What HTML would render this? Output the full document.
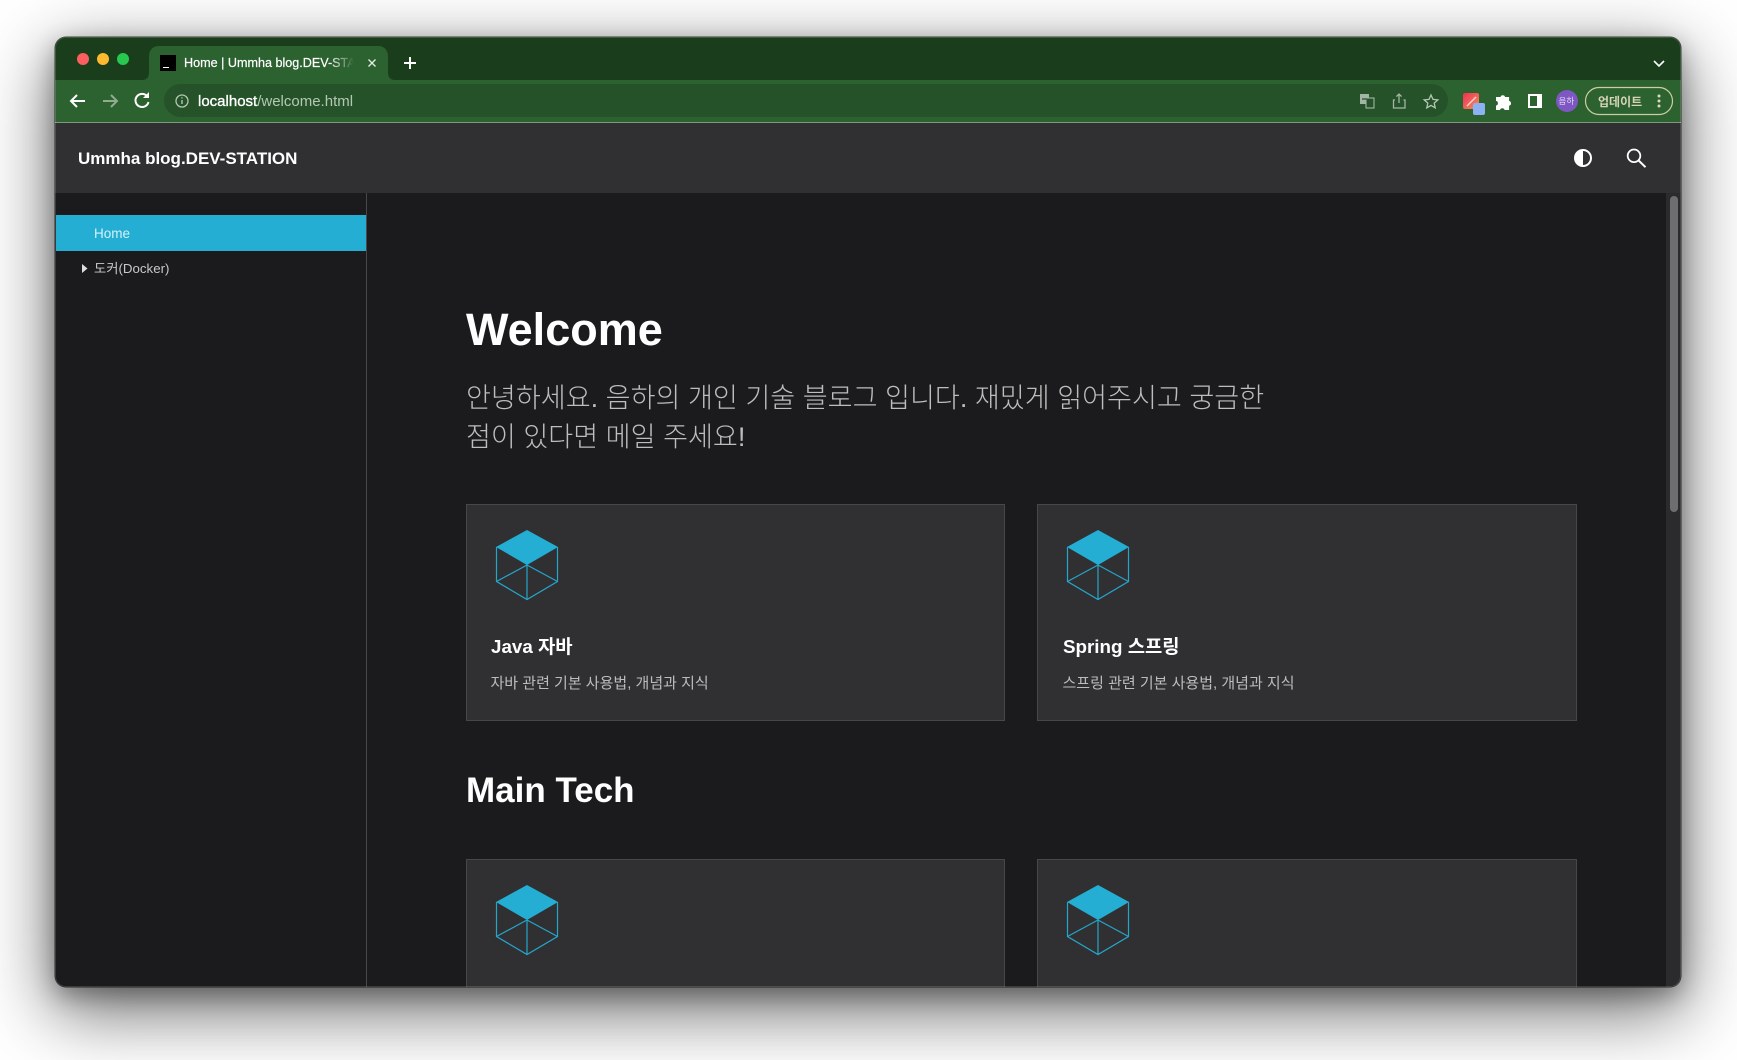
<!DOCTYPE html>
<html lang="ko"><head><meta charset="utf-8"><title>Home | Ummha blog.DEV-STATION</title>
<style>
*{box-sizing:border-box;margin:0;padding:0}
html,body{width:1737px;height:1060px;background:#fff;overflow:hidden;font-family:"Liberation Sans","Noto Sans CJK KR",sans-serif}
.a{position:absolute;white-space:nowrap}
#win{position:absolute;left:55px;top:37px;width:1626px;height:950px;border-radius:11px;overflow:hidden;background:#1b1b1d;box-shadow:0 22px 70px 4px rgba(0,0,0,.56),0 8px 24px rgba(0,0,0,.32)}
#layer{position:absolute;left:-55px;top:-37px;width:1737px;height:1060px}
#rim{position:absolute;left:55px;top:37px;width:1626px;height:950px;border-radius:11px;border:1px solid rgba(255,255,255,.15);box-shadow:0 0 0 .5px rgba(0,0,0,.7)}
.card{position:absolute;background:#303033;border:1px solid #47474a}
.t{font-size:18.8px;font-weight:700;color:#fff;position:absolute;white-space:nowrap;line-height:24px}
.d{font-size:15px;color:#bcbcbc;position:absolute;white-space:nowrap;line-height:20px}
svg{position:absolute;overflow:visible}
</style></head><body>
<div id="win"><div id="layer">
<div class="a" style="left:55px;top:37px;width:1627px;height:43px;background:#1a3e1b"></div>
<div class="a" style="left:55px;top:80px;width:1627px;height:42px;background:#2c6130"></div>
<div class="a" style="left:55px;top:122px;width:1627px;height:1px;background:#7d9a7e"></div>
<svg style="left:0;top:0" width="1737" height="122"><path d="M142 80c5 0 7-3 7-8V56c0-6 4-10 10-10h219c6 0 10 4 10 10v16c0 5 2 8 7 8z" fill="#2c6130"/>
<circle cx="83" cy="59" r="6" fill="#fb5f5f"/><circle cx="103" cy="59" r="6" fill="#fdb92f"/><circle cx="123" cy="59" r="6" fill="#27c84f"/>
<rect x="160" y="55" width="16" height="16" fill="#000"/><rect x="163" y="67" width="6" height="1" fill="#fff"/>
<path d="M368.5 59.5l7 7M375.5 59.5l-7 7" stroke="#e2ebe2" stroke-width="1.4"/>
<path d="M410 57v12M404 63h12" stroke="#fff" stroke-width="2"/>
<path d="M1654 61l5 5 5-5" fill="none" stroke="#fff" stroke-width="1.6"/>
<rect x="164" y="84" width="1284" height="33" rx="16.5" fill="#265229"/>
<path d="M85 101H72M77 95l-6 6 6 6" fill="none" stroke="#fff" stroke-width="2"/>
<path d="M103 101h13M111 95l6 6-6 6" fill="none" stroke="#8fab90" stroke-width="2"/>
<path d="M147 96a6.6 6.6 0 1 0 1.5 6" fill="none" stroke="#fff" stroke-width="2"/><path d="M149 92v6h-6z" fill="#fff"/>
<circle cx="182" cy="101" r="6" fill="none" stroke="#b3c6b3" stroke-width="1.3"/><path d="M182 100v4M182 97.3v1.2" stroke="#b3c6b3" stroke-width="1.4"/>
<rect x="1360" y="94" width="9" height="10" fill="#a3b6a3"/><rect x="1366" y="98" width="8" height="10" fill="#265229" stroke="#a3b6a3" stroke-width="1.1"/><path d="M1362 99h5" stroke="#3f5f40" stroke-width="1.5"/>
<path d="M1395 100h-1.5v8h11.5v-8h-1.5M1399 103V94M1396.4 96.6l2.6-2.6 2.6 2.6" fill="none" stroke="#a3b6a3" stroke-width="1.3"/>
<path d="M1431 95l2 4.4 4.8.5-3.6 3.2 1 4.7-4.2-2.4-4.2 2.4 1-4.7-3.6-3.2 4.8-.5z" fill="none" stroke="#b3c6b3" stroke-width="1.3"/>
<defs><linearGradient id="g" x1="0" y1="0" x2="1" y2="1"><stop offset="0" stop-color="#ee2f55"/><stop offset="1" stop-color="#f5915a"/></linearGradient></defs>
<rect x="1463" y="93" width="16" height="16" rx="2" fill="url(#g)"/><path d="M1467 106l9-9" stroke="#f8d9d9" stroke-width="1.3"/>
<rect x="1473" y="103" width="12" height="12" rx="2" fill="#8db2f3"/>
<path d="M1496 97h4.5a2.4 2.4 0 0 1 4.6 0h4v4a2.4 2.4 0 0 1 0 4.7v4.3h-4.5a2.4 2.4 0 0 0-4.6 0h-4v-4.4a2.4 2.4 0 0 0 0-4.7z" fill="#fff"/>
<rect x="1528" y="94" width="14" height="14" fill="#fff"/><rect x="1530" y="96" width="7" height="10" fill="#2c6130"/>
<circle cx="1567" cy="101" r="11" fill="#7e57c2"/>
<rect x="1585.5" y="87.5" width="87" height="27" rx="13.5" fill="none" stroke="#cfcda0" stroke-width="1.2"/>
<circle cx="1659" cy="96" r="1.5" fill="#dcd9bd"/><circle cx="1659" cy="101" r="1.5" fill="#dcd9bd"/><circle cx="1659" cy="106" r="1.5" fill="#dcd9bd"/>
</svg>
<div class="a" style="left:184px;top:55px;font-size:12.6px;line-height:16px;color:#fff;width:170px;overflow:hidden;-webkit-text-stroke:.2px #fff;-webkit-mask-image:linear-gradient(90deg,#000 85%,transparent)">Home | Ummha blog.DEV-STA</div>
<div class="a" style="left:198px;top:93.5px;font-size:15px;line-height:16px;color:#fff"><span style="-webkit-text-stroke:.35px #fff">localhost</span><span style="color:#b3c8b3">/welcome.html</span></div>
<div class="a" style="left:1558.5px;top:95px;font-size:8.5px;line-height:12px;color:#e3d9f5">음하</div>
<div class="a" style="left:1598px;top:94px;font-size:12px;line-height:16px;color:#d6d3b6;font-weight:700">업데이트</div>

<div class="a" style="left:55px;top:123px;width:1627px;height:70px;background:#303033"></div>
<div class="a" style="left:78px;top:148px;font-size:17px;line-height:22px;font-weight:700;color:#fff">Ummha blog.DEV-STATION</div>
<svg style="left:1573px;top:148px" width="20" height="20"><circle cx="10" cy="10" r="8" fill="none" stroke="#fff" stroke-width="2"/><path d="M10 2a8 8 0 0 0 0 16z" fill="#fff"/></svg>
<svg style="left:1625px;top:147px" width="22" height="22"><circle cx="9" cy="8.8" r="6.3" fill="none" stroke="#fff" stroke-width="1.8"/><path d="M13.5 13.4l7 6.8" stroke="#fff" stroke-width="2"/></svg>

<div class="a" style="left:55px;top:193px;width:311px;height:794px;background:#1b1b1d"></div>
<div class="a" style="left:366px;top:193px;width:1px;height:794px;background:#48484b"></div>
<div class="a" style="left:56px;top:215px;width:310px;height:36px;background:#24aed3"></div>
<div class="a" style="left:94px;top:224.5px;font-size:13.5px;line-height:17px;color:#d2f1fa">Home</div>
<svg style="left:82px;top:264px" width="6" height="9"><path d="M0 0l5.5 4.5L0 9z" fill="#ddd"/></svg>
<div class="a" style="left:94px;top:260px;font-size:13.3px;line-height:17px;color:#c8c8c8">도커(Docker)</div>

<div class="a" style="left:466px;top:300px;font-size:45px;line-height:60px;font-weight:700;color:#fff">Welcome</div>
<div class="a" style="left:466px;top:378px;font-size:27.1px;line-height:39px;color:#bdbdbd;font-weight:300">안녕하세요. 음하의 개인 기술 블로그 입니다. 재밌게 읽어주시고 궁금한<br>점이 있다면 메일 주세요!</div>

<div class="card" style="left:466px;top:504px;width:539px;height:217px"></div>
<div class="card" style="left:1037px;top:504px;width:540px;height:217px"></div>
<svg style="left:496px;top:530px" width="62" height="70"><path d="M31 0L62 17 31 35 0 17z" fill="#24aed3"/><path d="M.5 17v34.5L31 69.5 61.5 51.5V17M31 35v34.5M31 35L.5 51.5M31 35l30.5 16.5" fill="none" stroke="#24a6ca" stroke-width="1.2"/></svg>
<svg style="left:1067px;top:530px" width="62" height="70"><path d="M31 0L62 17 31 35 0 17z" fill="#24aed3"/><path d="M.5 17v34.5L31 69.5 61.5 51.5V17M31 35v34.5M31 35L.5 51.5M31 35l30.5 16.5" fill="none" stroke="#24a6ca" stroke-width="1.2"/></svg>
<div class="t" style="left:491px;top:634.5px">Java 자바</div>
<div class="d" style="left:490.5px;top:674px">자바 관련 기본 사용법, 개념과 지식</div>
<div class="t" style="left:1063px;top:634.5px">Spring 스프링</div>
<div class="d" style="left:1062.5px;top:674px">스프링 관련 기본 사용법, 개념과 지식</div>

<div class="a" style="left:466px;top:769px;font-size:35px;line-height:44px;font-weight:700;color:#fff">Main Tech</div>
<div class="card" style="left:466px;top:859px;width:539px;height:200px"></div>
<div class="card" style="left:1037px;top:859px;width:540px;height:200px"></div>
<svg style="left:496px;top:885px" width="62" height="70"><path d="M31 0L62 17 31 35 0 17z" fill="#24aed3"/><path d="M.5 17v34.5L31 69.5 61.5 51.5V17M31 35v34.5M31 35L.5 51.5M31 35l30.5 16.5" fill="none" stroke="#24a6ca" stroke-width="1.2"/></svg>
<svg style="left:1067px;top:885px" width="62" height="70"><path d="M31 0L62 17 31 35 0 17z" fill="#24aed3"/><path d="M.5 17v34.5L31 69.5 61.5 51.5V17M31 35v34.5M31 35L.5 51.5M31 35l30.5 16.5" fill="none" stroke="#24a6ca" stroke-width="1.2"/></svg>

<div class="a" style="left:1666px;top:193px;width:16px;height:794px;background:#2b2b2d"></div>
<div class="a" style="left:1670px;top:196px;width:8px;height:316px;border-radius:4px;background:#6e6e70"></div>
</div></div>
<div id="rim"></div>
</body></html>
